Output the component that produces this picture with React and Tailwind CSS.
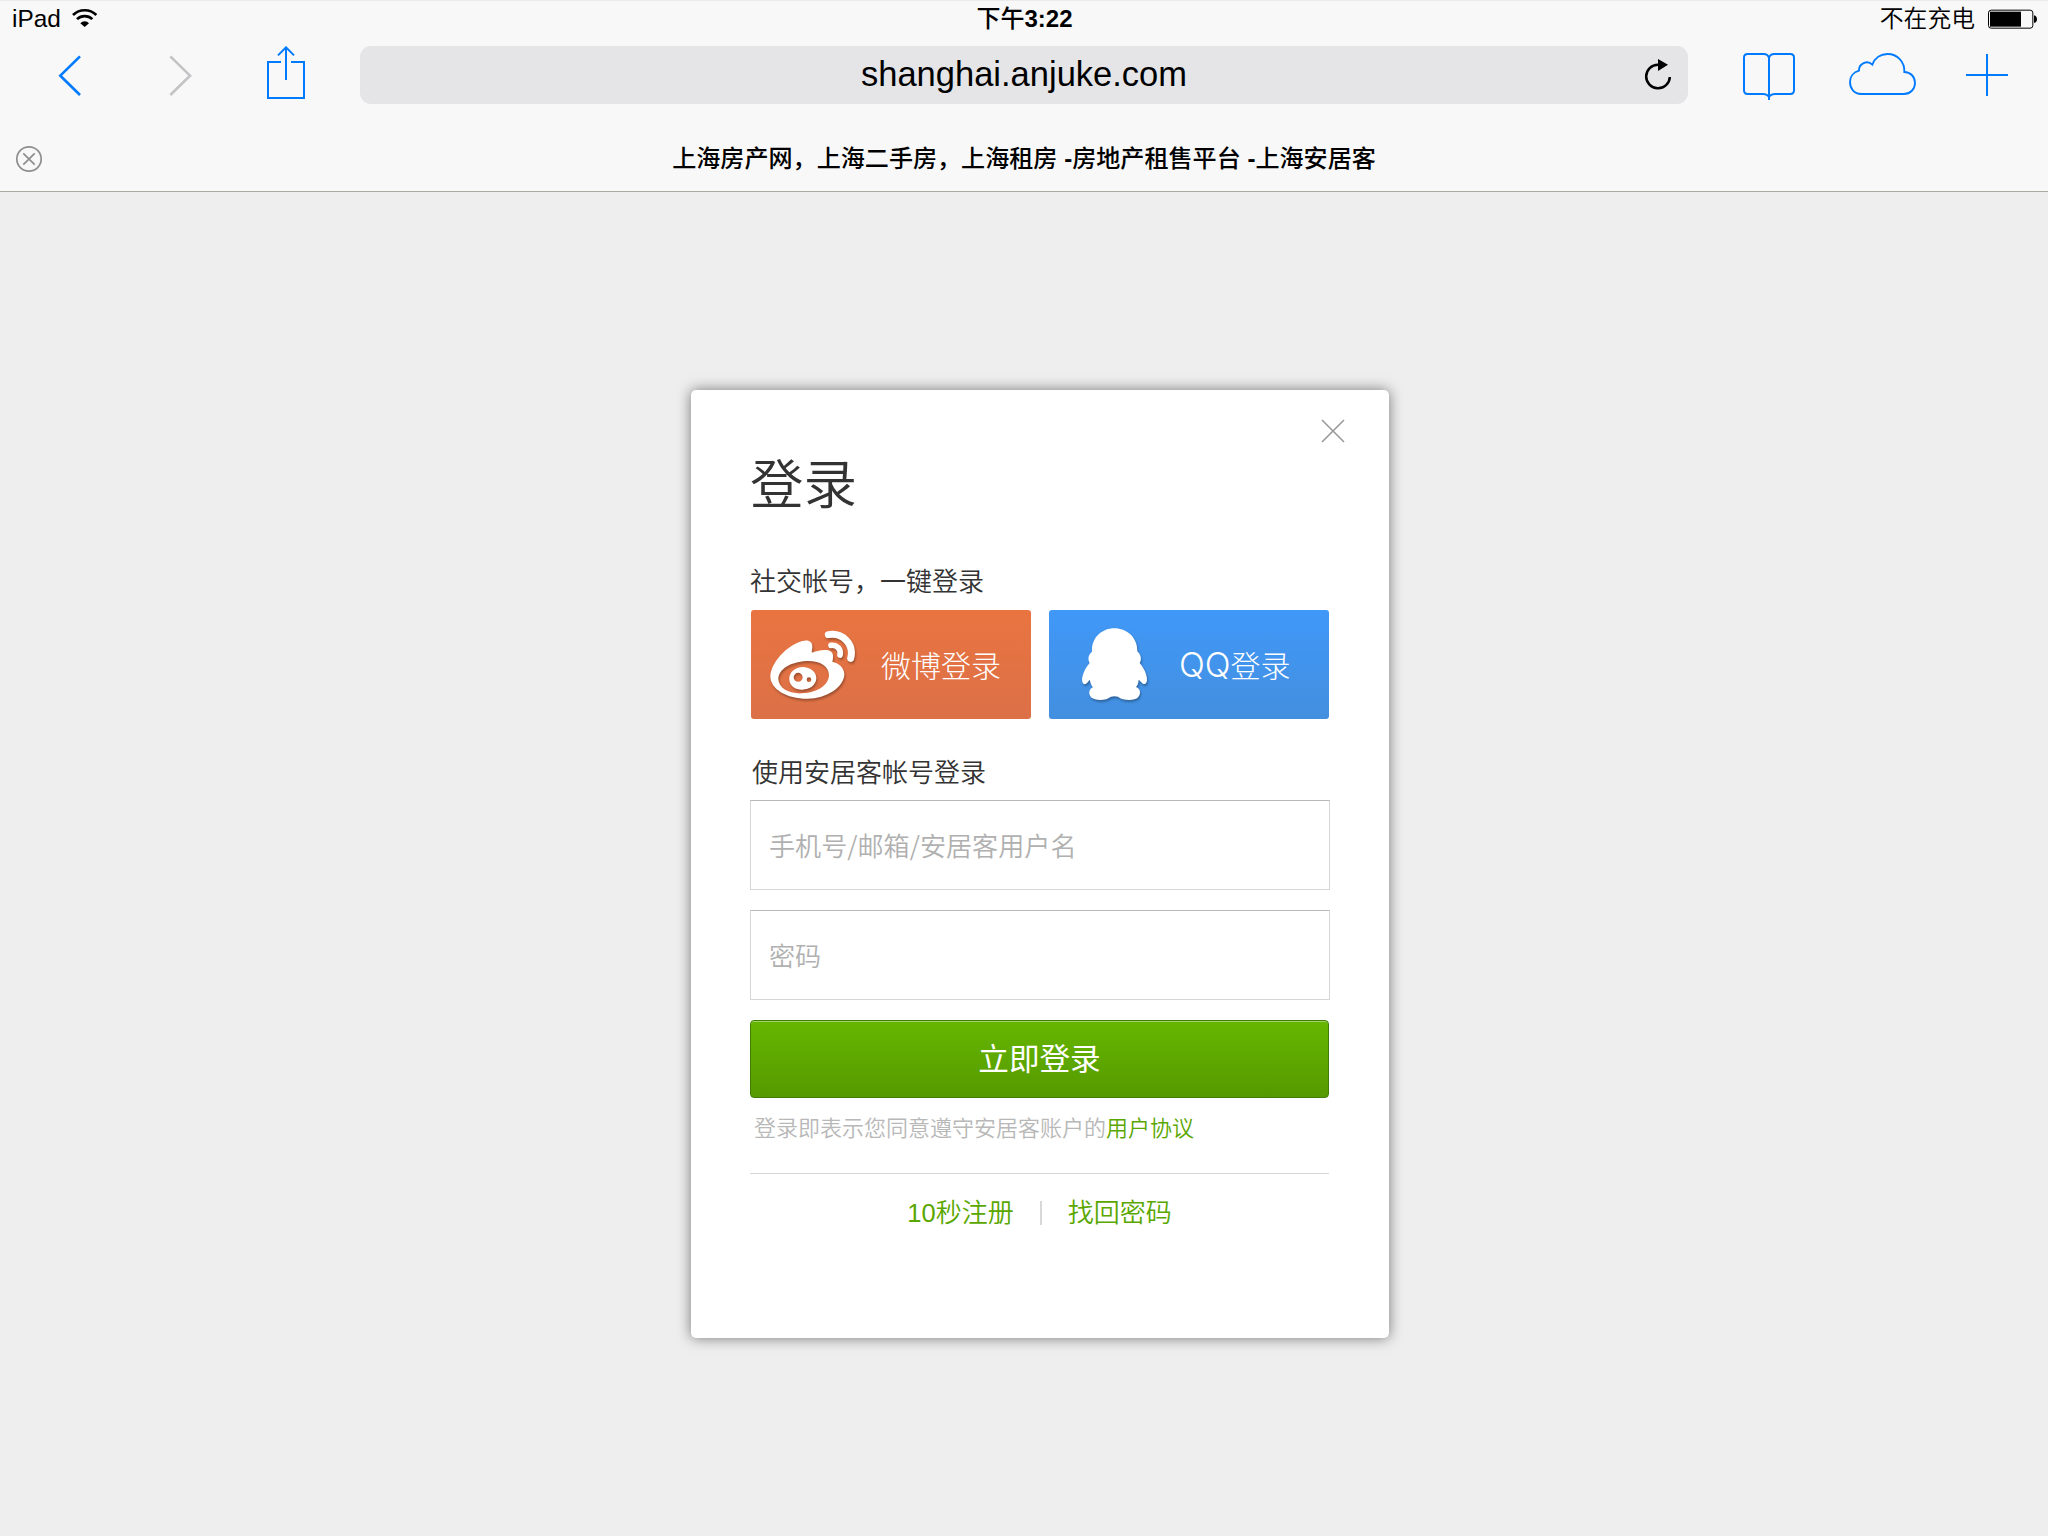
import React from 'react';

const BLUE = '#007aff';

function StatusBar() {
  return (
    <div className="flex h-[37px] items-center justify-between pl-3 pr-[11px] text-[24px] leading-[35px] text-black">
      <div className="flex flex-1 items-center">
        <span className="-mt-0.5 text-[24.400px]">iPad</span>
        <svg className="ml-[11px] -mt-[3px]" width="26" height="20" viewBox="216 24 78 60" fill="none" stroke="#000">
          <path d="M219 45a50 50 0 0 1 70 0" strokeWidth="8" />
          <path d="M231 57.500a33 33 0 0 1 46 0" strokeWidth="8" />
          <path d="M241 69.500a18 18 0 0 1 26 0L254 81z" fill="#000" stroke="none" />
        </svg>
      </div>
      <div className="-mt-0.5 font-bold">
        <span className="font-medium">下午</span>3:22
      </div>
      <div className="flex flex-1 items-center justify-end">
        <span className="-mt-0.5 font-[350] text-[23.800px]">不在充电</span>
        <svg className="ml-[12px] -mt-0.5" width="50" height="20" viewBox="1041 25 150 60" fill="none">
          <rect x="1045.500" y="28.500" width="133" height="54" rx="8" stroke="#000" strokeWidth="3" />
          <path d="M1050 33h93v45h-93z" fill="#000" />
          <path d="M1182 44q9 3 9 11.500t-9 11.500z" fill="#000" />
        </svg>
      </div>
    </div>
  );
}

function Toolbar() {
  return (
    <div className="mt-2 flex h-[58px]">
      <div className="flex w-[360px] pl-[57px]">
        <svg width="26" height="58" viewBox="171 138 78 174" fill="none" stroke={BLUE} strokeWidth="8">
          <path d="M240 169L181 227l59 58" />
        </svg>
        <svg className="ml-[85px]" width="26" height="58" viewBox="504 138 78 174" fill="none" stroke="#c4c4c6" strokeWidth="8">
          <path d="M511 169l59 58-59 58" />
        </svg>
        <svg className="ml-[72px]" width="40" height="58" viewBox="798 138 120 174" fill="none" stroke={BLUE} strokeWidth="6">
          <path d="M843 186h-39v108h108V186h-39M858 240v-98M834 166l24-24 24 24" />
        </svg>
      </div>
      <div className="flex w-[1328px] items-center rounded-[11px] bg-[#e5e5e7]">
        <div className="w-[48px]" />
        <div className="-mt-0.5 flex-1 text-center text-[34.500px] leading-[56px] text-black">shanghai.anjuke.com</div>
        <svg className="mr-[13px]" width="35" height="58" viewBox="0 138 105 174" fill="none" stroke="#000" strokeWidth="7.500">
          <path d="M89.500 231a35.500 35.500 0 1 1-35.500-37" />
          <path d="M54 177l30 17-30 19z" fill="#000" stroke="none" />
        </svg>
      </div>
      <div className="flex flex-1 pl-[54px]">
        <svg width="54" height="58" viewBox="306 138 162 174" fill="none" stroke={BLUE} strokeWidth="6" strokeLinejoin="round">
          <path d="M387 300V174Q384 162 371 162H323Q312 162 312 173V271Q312 282 323 282H369Q380 282 387 290Q394 282 405 282H451Q462 282 462 271V173Q462 162 451 162H403Q390 162 387 174" />
        </svg>
        <svg className="ml-[51px]" width="70" height="58" viewBox="621 138 210 174" fill="none" stroke={BLUE} strokeWidth="5.500">
          <path d="M664 282C642 282 630 265 630 246C630 229 641 216 657 212C656 190 682 179 697 194C704 174 722 162 743 162C771 162 795 185 793 216C812 216 825 231 825 249C825 267 811 282 792 282Z" />
        </svg>
        <svg className="ml-[48px]" width="44" height="58" viewBox="975 138 132 174" fill="none" stroke={BLUE} strokeWidth="6">
          <path d="M978 225h126M1041 162v126" />
        </svg>
      </div>
    </div>
  );
}

function TabBar() {
  return (
    <div className="mt-[26px] flex h-[58px] items-center">
      <svg className="ml-[15px]" width="28" height="28" viewBox="0 0 28 28" fill="none" stroke="#8e8e8e" strokeWidth="1.700">
        <circle cx="14" cy="14" r="12.200" />
        <path d="M8.300 8.300l11.400 11.400M19.700 8.300L8.300 19.700" />
      </svg>
      <div className="mr-[43px] flex-1 text-center text-[24.080px] font-medium leading-[58px] text-black">
        上海房产网，上海二手房，上海租房 <b>-</b>房地产租售平台 <b>-</b>上海安居客
      </div>
    </div>
  );
}

function WeiboIcon() {
  return (
    <svg className="drop-shadow-[1px_2px_1px_rgba(0,0,0,0.3)]" width="88" height="72" viewBox="87 88 264 216" fill="none">
      <path
        fill="#fff"
        fillRule="evenodd"
        d="M91 231C92 190 140 137 187 124C207 119 217 126 217 141C217 150 214 156 216 159C227 156 246 149 264 152C280 156 282 168 277 186C295 190 312 202 313 223C313 262 260 297 202 297C140 297 92 268 91 231ZM115 239C117 266 146 283 186 281C234 279 267 255 267 226C267 198 237 182 199 184C150 187 115 209 115 239Z"
      />
      <path
        fill="#fff"
        fillRule="evenodd"
        d="M148 240C146 218 166 201 191 202C214 204 229 218 229 236C228 256 210 270 186 270C165 270 149 258 148 240ZM161 233a13.500 13.500 0 1 0 27 0a13.500 13.500 0 1 0 -27 0ZM200 240a7 7 0 1 0 14 0a7 7 0 1 0 -14 0Z"
      />
      <path d="M265 105C308 98 343 133 332 176" stroke="#fff" strokeWidth="21" strokeLinecap="round" />
      <path d="M273 137C291 135 304 149 300 166" stroke="#fff" strokeWidth="17" strokeLinecap="round" />
    </svg>
  );
}

function QQIcon() {
  return (
    <svg className="drop-shadow-[1px_2px_1px_rgba(0,0,0,0.3)]" width="68" height="76" viewBox="123 80 204 228">
      <path
        fill="#fff"
        d="M223 84C260 84 293 111 292 153C303 163 306 177 299 188C312 204 321 222 321 239C320 250 315 253 309 250C304 247 299 239 296 238C295 250 292 256 288 260C304 266 303 284 291 294C274 303 246 299 234 289Q223 287 213 289C200 299 174 303 156 293C145 284 144 268 159 261C154 255 152 250 149 238C144 244 140 251 134 252C126 250 125 240 127 230C131 214 139 199 149 188C142 177 145 162 156 154C154 111 187 84 223 84Z"
      />
    </svg>
  );
}

function Field({ type, placeholder }) {
  return (
    <input
      type={type}
      placeholder={placeholder}
      className="block h-[90px] w-[580px] border border-[#d6d6d6] border-t-[#b8b8b8] bg-white pl-[18px] pr-[19px] font-['Noto_Sans_CJK_SC',sans-serif] text-[26.100px] font-[350] text-[#333] outline-none placeholder:text-[#b0b0b0]"
    />
  );
}

function LoginCard() {
  return (
    <div className="ml-[691px] mt-[198px] h-[948px] w-[698px] rounded-[5px] bg-white pl-[59px] font-[350] shadow-[0_0_14px_rgba(0,0,0,0.5)]">
      <div className="flex h-[64px] items-end justify-end pb-[9px] pr-[43px]">
        <svg width="26" height="26" viewBox="0 0 26 26" stroke="#999" strokeWidth="1.600">
          <path d="M2 1l22 22M24 1L2 23" />
        </svg>
      </div>
      <h1 className="h-[66px] text-[53.500px] leading-[64px] text-[#333]">登录</h1>
      <p className="mt-[44px] h-[36px] text-[26px] leading-[37px] text-[#333]">社交帐号，一键登录</p>
      <div className="ml-px mt-[10px] flex gap-[18px] font-['Noto_Sans_CJK_SC',sans-serif] text-[30px] font-light text-white">
        <button className="flex h-[109px] w-[280px] items-center rounded-[3px] bg-linear-to-b from-[#e97440] to-[#dc7047] pl-[18px]">
          <WeiboIcon />
          <span className="ml-[24px]">微博登录</span>
        </button>
        <button className="flex h-[109px] w-[280px] items-center rounded-[3px] bg-linear-to-b from-[#4098f8] to-[#438fdf] pl-[32px]">
          <QQIcon />
          <span className="ml-[30px] flex items-center">
            <span className="font-[Inter,sans-serif] text-[34px] font-[350]">QQ</span>登录
          </span>
        </button>
      </div>
      <p className="ml-0.5 mt-[35px] h-[36px] text-[26px] leading-[38px] text-[#333]">使用安居客帐号登录</p>
      <div className="mt-[10px] flex flex-col gap-[20px]">
        <Field type="text" placeholder="手机号/邮箱/安居客用户名" />
        <Field type="password" placeholder="密码" />
      </div>
      <button className="mt-[20px] block h-[78px] w-[579px] rounded-[4px] border border-[#3f7d04] bg-linear-to-b from-[#66b600] to-[#559a00] text-center text-[30.6px] font-normal leading-[74px] text-white shadow-[inset_0_1px_0_rgba(255,255,255,0.4)]">
        立即登录
      </button>
      <p className="ml-1 mt-[12px] h-[36px] text-[22px] leading-[37px] text-[#b8b8b8]">
        登录即表示您同意遵守安居客账户的<a className="text-[#5aa700]">用户协议</a>
      </p>
      <div className="mt-[27px] h-px w-[579px] bg-[#d8d8d8]" />
      <div className="mt-[19px] flex h-[40px] w-[579px] items-center justify-center text-[26px] leading-[40px] text-[#5aa700]">
        <a>
          <span className="text-[25.500px]">10</span>秒注册
        </a>
        <span className="mx-[26px] h-[24px] w-0.5 bg-[#d8d8d8]" />
        <a>找回密码</a>
      </div>
    </div>
  );
}

export default function App() {
  return (
    <div className="h-[1536px] w-[2048px] overflow-hidden bg-[#eee] font-['Liberation_Sans','Noto_Sans_CJK_SC',sans-serif]">
      <header className="h-[192px] border-b border-t border-b-[#a9aaa0] border-t-[#ebebeb] bg-[#f8f8f8]">
        <StatusBar />
        <Toolbar />
        <TabBar />
      </header>
      <main>
        <LoginCard />
      </main>
    </div>
  );
}
